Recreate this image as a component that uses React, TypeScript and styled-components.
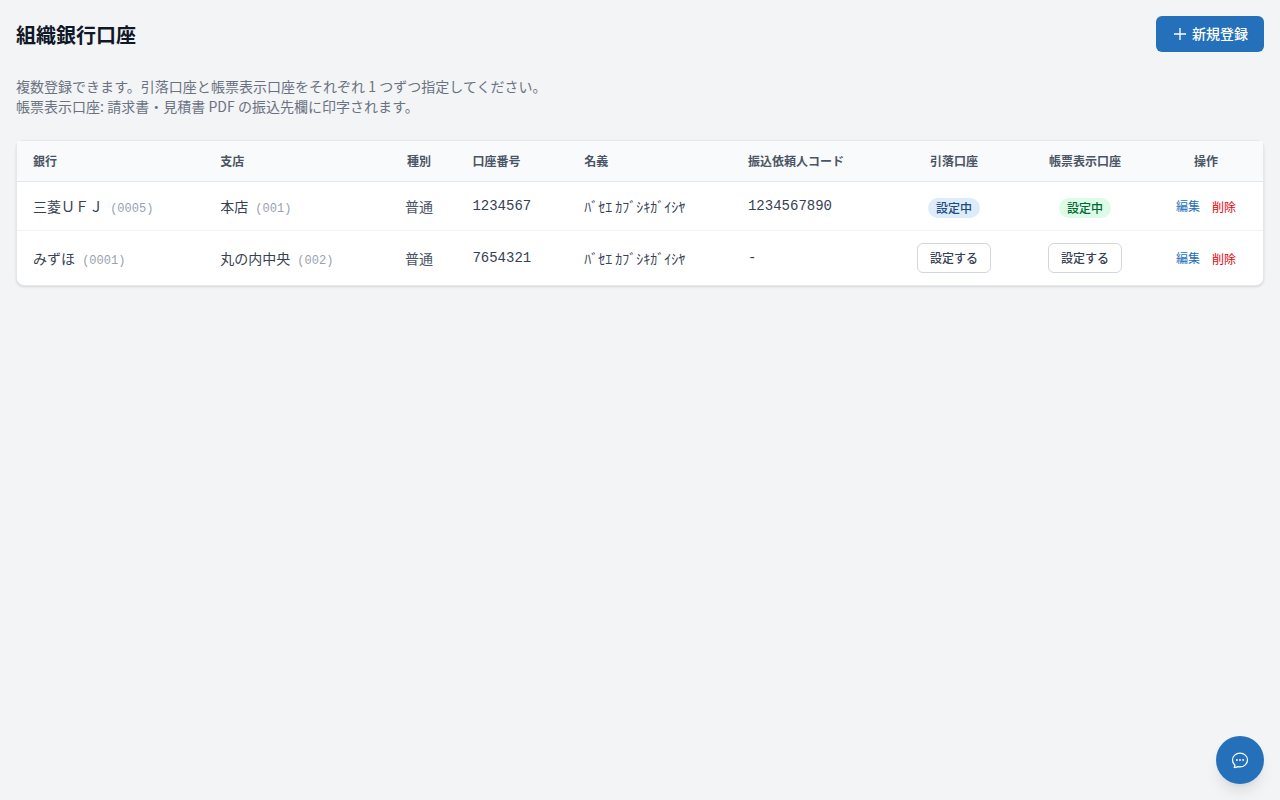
import React from "react";
import styled, { createGlobalStyle } from "styled-components";

const GlobalStyle = createGlobalStyle`
  *, *::before, *::after { box-sizing: border-box; }
  body {
    margin: 0;
    background: #f3f4f6;
    color: #101828;
    font-family: "Noto Sans CJK JP", sans-serif;
    font-size: 14px;
    line-height: 20px;
  }
  button { font-family: inherit; cursor: pointer; }
`;

const Page = styled.main`
  min-height: 100vh;
  padding: 16px;
`;

const Header = styled.header`
  display: flex;
  align-items: center;
  justify-content: space-between;
  height: 36px;
  margin-bottom: 24px;
`;

const Title = styled.h1`
  margin: 0;
  padding-top: 2px;
  font-size: 20px;
  line-height: 28px;
  font-weight: 700;
`;

const PrimaryButton = styled.button`
  display: inline-flex;
  align-items: center;
  gap: 4px;
  height: 36px;
  padding: 0 16px;
  border: 0;
  border-radius: 6px;
  background: #2570ba;
  color: #fff;
  font-size: 14px;
  line-height: 20px;
  font-weight: 500;
`;

const ButtonLabel = styled.span`
  padding-bottom: 2px;
`;

const Description = styled.p`
  margin: 0 0 24px;
  color: #6a7282;
  letter-spacing: 0.02px;
`;

const Card = styled.section`
  border: 1px solid #e5e7eb;
  border-radius: 8px;
  background: #fff;
  box-shadow: 0 1px 3px rgba(0, 0, 0, 0.1), 0 1px 2px -1px rgba(0, 0, 0, 0.1);
`;

const Table = styled.table`
  width: 100%;
  table-layout: fixed;
  border-collapse: separate;
  border-spacing: 0;
`;

const Col = styled.col<{ $w: number }>`
  width: ${(p) => p.$w}px;
`;

const HeadCell = styled.th<{ $center?: boolean }>`
  padding: 12px 16px;
  border-bottom: 1px solid #e5e7eb;
  background: #f9fafb;
  color: #4a5565;
  font-size: 12px;
  line-height: 16px;
  font-weight: 700;
  text-align: ${(p) => (p.$center ? "center" : "left")};
  white-space: nowrap;
`;

const Cell = styled.td<{ $center?: boolean; $mono?: boolean; $muted?: boolean }>`
  padding: 12px 16px;
  color: ${(p) => (p.$muted ? "#4a5565" : "#364153")};
  font-family: ${(p) => (p.$mono ? '"Liberation Mono", monospace' : "inherit")};
  text-align: ${(p) => (p.$center ? "center" : "left")};
  white-space: nowrap;
`;

const Row = styled.tr`
  &:not(:last-child) > td { border-bottom: 1px solid #f3f4f6; }
`;

const Code = styled.span`
  margin-left: 4px;
  color: #99a1af;
  font-family: "Liberation Mono", monospace;
  font-size: 12px;
  line-height: 16px;
`;

const Badge = styled.span<{ $tone: "blue" | "green" }>`
  display: inline-block;
  margin-top: 4px;
  padding: 2px 8px;
  border-radius: 999px;
  background: ${(p) => (p.$tone === "blue" ? "#dcecf9" : "#dcfce7")};
  color: ${(p) => (p.$tone === "blue" ? "#1b4b7c" : "#016630")};
  font-size: 12px;
  line-height: 16px;
  font-weight: 500;
  vertical-align: top;
`;

const OutlineButton = styled.button`
  display: inline-block;
  height: 30px;
  padding: 0 12px;
  border: 1px solid #d1d5dc;
  border-radius: 6px;
  background: #fff;
  color: #364153;
  font-size: 12px;
  line-height: 16px;
  font-weight: 500;
  vertical-align: top;
`;

const LinkButton = styled.button<{ $danger?: boolean }>`
  padding: 0;
  border: 0;
  background: none;
  color: ${(p) => (p.$danger ? "#e7000b" : "#2570ba")};
  font-size: 12px;
  line-height: 16px;
  vertical-align: ${(p) => (p.$danger ? "baseline" : "1px")};
  & + & { margin-left: 12px; }
`;

const ChatButton = styled.button`
  position: fixed;
  right: 16px;
  bottom: 16px;
  display: flex;
  align-items: center;
  justify-content: center;
  width: 48px;
  height: 48px;
  padding: 0;
  border: 0;
  border-radius: 50%;
  background: #2570ba;
  color: #fff;
  box-shadow: 0 10px 15px -3px rgba(0, 0, 0, 0.1), 0 4px 6px -4px rgba(0, 0, 0, 0.1);
`;

const PlusIcon = () => (
  <svg width="16" height="16" viewBox="0 0 24 24" fill="none" stroke="currentColor" strokeWidth="2">
    <path d="M12 3v18M3 12h18" />
  </svg>
);

const ChatIcon = () => (
  <svg width="20" height="20" viewBox="0 0 24 24" fill="none" stroke="currentColor" strokeWidth="1.5" strokeLinecap="round" strokeLinejoin="round">
    <path d="M8.625 12a.375.375 0 1 1-.75 0 .375.375 0 0 1 .75 0Zm0 0H8.25m4.125 0a.375.375 0 1 1-.75 0 .375.375 0 0 1 .75 0Zm0 0H12m4.125 0a.375.375 0 1 1-.75 0 .375.375 0 0 1 .75 0Zm0 0h-.375M21 12c0 4.556-4.03 8.25-9 8.25a9.764 9.764 0 0 1-2.555-.337A5.972 5.972 0 0 1 5.41 20.97a5.969 5.969 0 0 1-.474-.065 4.48 4.48 0 0 0 .978-2.025c.09-.457-.133-.901-.467-1.226C3.93 16.178 3 14.189 3 12c0-4.556 4.03-8.25 9-8.25s9 3.694 9 8.25Z" />
  </svg>
);

type Account = {
  bank: string;
  bankCode: string;
  branch: string;
  branchCode: string;
  number: string;
  client: string;
  active: boolean;
};

const accounts: Account[] = [
  { bank: "三菱ＵＦＪ", bankCode: "0005", branch: "本店", branchCode: "001", number: "1234567", client: "1234567890", active: true },
  { bank: "みずほ", bankCode: "0001", branch: "丸の内中央", branchCode: "002", number: "7654321", client: "-", active: false },
];

const widths = [187.2, 177.6, 74.6, 111.8, 163.8, 155, 134, 128, 114];

const Status = ({ active, tone }: { active: boolean; tone: "blue" | "green" }) =>
  active ? <Badge $tone={tone}>設定中</Badge> : <OutlineButton>設定する</OutlineButton>;

export default function App() {
  return (
    <>
      <GlobalStyle />
      <Page>
        <Header>
          <Title>組織銀行口座</Title>
          <PrimaryButton>
            <PlusIcon />
            <ButtonLabel>新規登録</ButtonLabel>
          </PrimaryButton>
        </Header>
        <Description>
          複数登録できます。引落口座と帳票表示口座をそれぞれ 1 つずつ指定してください。
          <br />
          帳票表示口座: 請求書・見積書 PDF の振込先欄に印字されます。
        </Description>
        <Card>
          <Table>
            <colgroup>
              {widths.map((w, i) => (
                <Col key={i} $w={w} />
              ))}
            </colgroup>
            <thead>
              <tr>
                <HeadCell>銀行</HeadCell>
                <HeadCell>支店</HeadCell>
                <HeadCell $center>種別</HeadCell>
                <HeadCell>口座番号</HeadCell>
                <HeadCell>名義</HeadCell>
                <HeadCell>振込依頼人コード</HeadCell>
                <HeadCell $center>引落口座</HeadCell>
                <HeadCell $center>帳票表示口座</HeadCell>
                <HeadCell $center>操作</HeadCell>
              </tr>
            </thead>
            <tbody>
              {accounts.map((a) => (
                <Row key={a.number}>
                  <Cell>
                    {a.bank} <Code>({a.bankCode})</Code>
                  </Cell>
                  <Cell>
                    {a.branch} <Code>({a.branchCode})</Code>
                  </Cell>
                  <Cell $center $muted>普通</Cell>
                  <Cell $mono>{a.number}</Cell>
                  <Cell>ﾊﾞｾｴ ｶﾌﾞｼｷｶﾞｲｼﾔ</Cell>
                  <Cell $mono>{a.client}</Cell>
                  <Cell $center>
                    <Status active={a.active} tone="blue" />
                  </Cell>
                  <Cell $center>
                    <Status active={a.active} tone="green" />
                  </Cell>
                  <Cell $center>
                    <LinkButton>編集</LinkButton>
                    <LinkButton $danger>削除</LinkButton>
                  </Cell>
                </Row>
              ))}
            </tbody>
          </Table>
        </Card>
        <ChatButton aria-label="チャット">
          <ChatIcon />
        </ChatButton>
      </Page>
    </>
  );
}
